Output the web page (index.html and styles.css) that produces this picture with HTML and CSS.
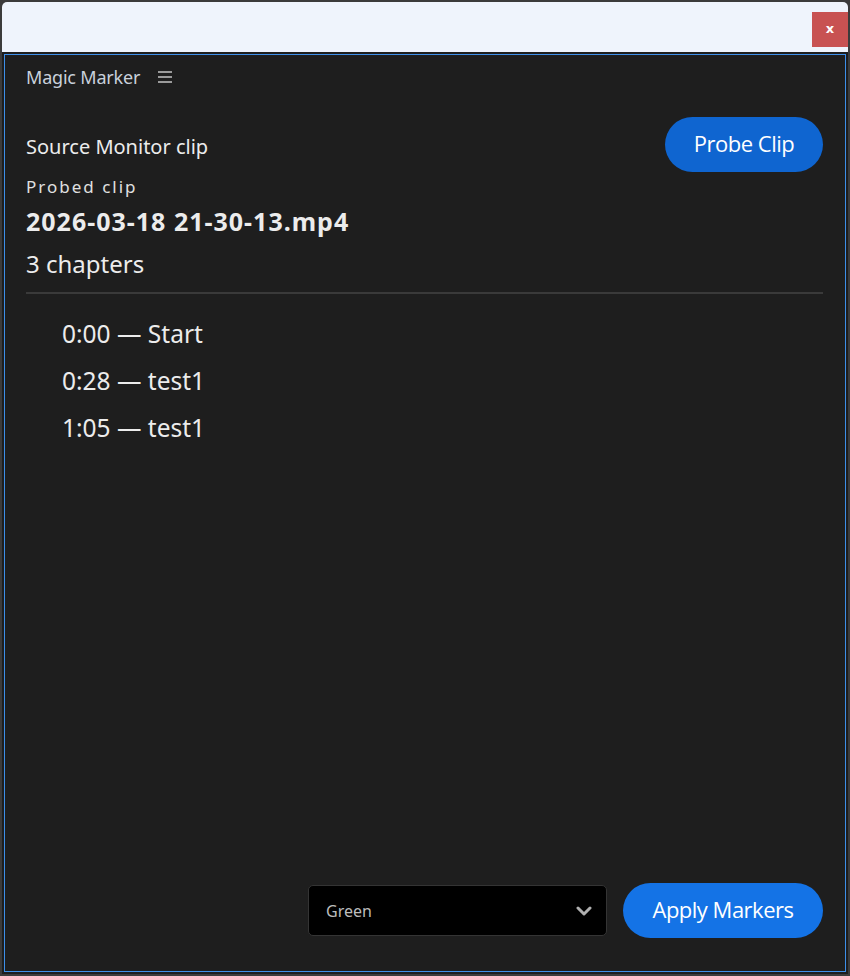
FILE: index.html
```html
<!DOCTYPE html>
<html lang="en">
<head>
  <meta charset="UTF-8" />
  <title>Magic Marker</title>
  <link rel="stylesheet" href="styles.css">
</head>
<body>
  <div class="window">
    <div class="titlebar">
      <button class="close-btn">x</button>
    </div>

    <div class="panel">
      <div class="panel-header">
        <span class="panel-title">Magic Marker</span>
        <span class="menu-icon">
          <svg width="14" height="12" viewBox="0 0 14 12">
            <rect x="0" y="0" width="14" height="2" fill="#9a9a9a"/>
            <rect x="0" y="5" width="14" height="2" fill="#9a9a9a"/>
            <rect x="0" y="10" width="14" height="2" fill="#9a9a9a"/>
          </svg>
        </span>
      </div>

      <div class="source-row">
        <div class="source-label">Source Monitor clip</div>
        <button class="pill-btn probe-btn">Probe Clip</button>
      </div>

      <div class="probed-label">Probed clip</div>
      <div class="clip-name">2026-03-18 21-30-13.mp4</div>
      <div class="chapter-count">3 chapters</div>

      <hr class="divider">

      <ul class="chapters">
        <li>0:00 — Start</li>
        <li>0:28 — test1</li>
        <li>1:05 — test1</li>
      </ul>

      <div class="footer">
        <div class="select-box">
          <span class="select-value">Green</span>
          <svg class="chevron" width="16" height="10" viewBox="0 0 16 10">
            <path d="M2 2 L8 8 L14 2" fill="none" stroke="#b0b0b0" stroke-width="3" stroke-linecap="round" stroke-linejoin="round"/>
          </svg>
        </div>
        <button class="pill-btn apply-btn">Apply Markers</button>
      </div>
    </div>
  </div>
</body>
</html>
```

FILE: styles.css
```css
html, body {
  margin: 0;
  padding: 0;
  height: 100%;
  background: #3b3b3b;
  font-family: "Noto Sans", "Open Sans", sans-serif;
  overflow: hidden;
}

body {
  padding: 2px;
  box-sizing: border-box;
}

.window {
  height: 972px;
  width: 846px;
  background: #1e1e1e;
  border-radius: 5px 5px 0 0;
  display: flex;
  flex-direction: column;
  overflow: hidden;
}

.titlebar {
  height: 50px;
  background: #eff4fc;
  display: flex;
  justify-content: flex-end;
  align-items: flex-start;
  padding-top: 10px;
  box-sizing: border-box;
}

.close-btn {
  width: 36px;
  height: 35px;
  background: #c85252;
  color: white;
  border: none;
  font-family: "DejaVu Sans", sans-serif;
  font-weight: bold;
  font-size: 13px;
  padding: 0 0 2px 0;
  cursor: pointer;
}

.panel {
  flex: 1;
  margin: 2px;
  border: 1px solid #3d8fe8;
  display: flex;
  flex-direction: column;
  padding: 0 22px 33px 21px;
  color: #ececec;
}

.panel-header {
  display: flex;
  align-items: center;
  height: 43px;
}

.panel-title {
  font-size: 18px;
  color: #c9d1dc;
  letter-spacing: -0.2px;
}

.menu-icon {
  margin-left: 18px;
  display: flex;
  padding-top: 1px;
}

.source-row {
  display: flex;
  justify-content: space-between;
  align-items: center;
  margin-top: 19px;
}

.source-label {
  font-size: 20px;
  margin-top: 3px;
}

.pill-btn {
  border: none;
  border-radius: 28px;
  color: white;
  font-family: "Open Sans", sans-serif;
  font-size: 22px;
  letter-spacing: -0.5px;
  height: 55px;
  cursor: pointer;
}

.probe-btn {
  background: #0f65d0;
  width: 158px;
  padding: 0 0 3px 0;
}

.probed-label {
  font-size: 17px;
  line-height: 23px;
  letter-spacing: 2px;
  margin-top: 3px;
  color: #e0e0e0;
}

.clip-name {
  font-size: 25px;
  line-height: 34px;
  font-weight: bold;
  letter-spacing: 1px;
  margin-top: 6px;
}

.chapter-count {
  font-size: 24px;
  line-height: 33px;
  margin-top: 9px;
}

.divider {
  border: none;
  height: 2px;
  background: #3a3a3a;
  margin: 12px 0 0 0;
}

.chapters {
  list-style: none;
  margin: 24px 0 0 0;
  padding: 0 0 0 36px;
  font-size: 24.5px;
}

.chapters li {
  height: 47px;
  line-height: 32px;
}

.footer {
  margin-top: auto;
  display: flex;
  justify-content: flex-end;
  align-items: center;
  gap: 16px;
}

.select-box {
  width: 299px;
  height: 51px;
  box-sizing: border-box;
  background: #000;
  border: 1px solid #343434;
  border-radius: 5px;
  display: flex;
  align-items: center;
  justify-content: space-between;
  padding: 0 14px 0 17px;
}

.select-value {
  font-size: 16px;
  color: #bcbcbc;
}

.apply-btn {
  background: #1473e6;
  width: 200px;
  padding: 0 0 3px 0;
}
```
